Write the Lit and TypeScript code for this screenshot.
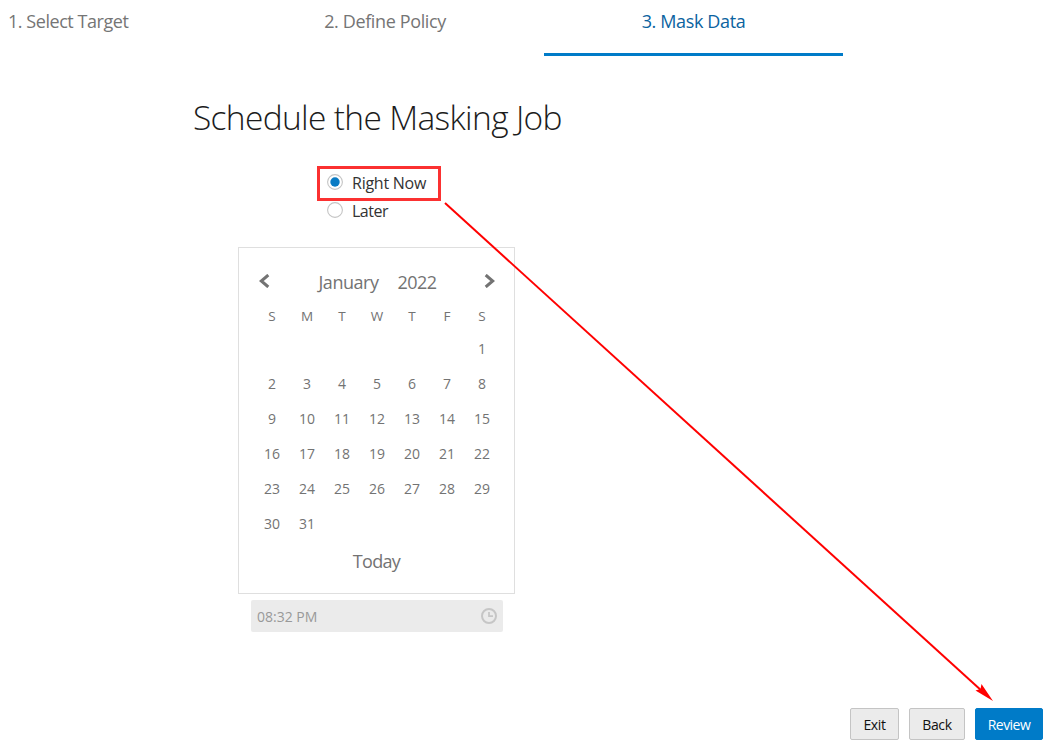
import { LitElement, html, css } from "lit";
import { customElement, state } from "lit/decorators.js";

const WEEKDAYS = ["S", "M", "T", "W", "T", "F", "S"];

@customElement("month-calendar")
class MonthCalendar extends LitElement {
  static styles = css`
    :host {
      display: block;
      box-sizing: border-box;
      width: 277px;
      height: 347px;
      border: 1px solid #dfdfdf;
      padding: 16px 15px 0;
      color: #737373;
    }
    .head {
      display: flex;
      justify-content: space-between;
      align-items: center;
      height: 34px;
      padding: 0 4px 0 5px;
    }
    .head svg {
      display: block;
      width: 11px;
      height: 14px;
    }
    .title {
      display: flex;
      gap: 20px;
      font-size: 18px;
      line-height: 34px;
      padding-top: 2px;
      white-space: nowrap;
    }
    .month { width: 60px; letter-spacing: -0.47px; text-indent: 1px; }
    .year { width: 39px; letter-spacing: -0.55px; }
    .grid {
      display: grid;
      grid-template-columns: repeat(7, 35px);
      grid-auto-rows: 35px;
      padding-left: 0.5px;
      font-size: 14px;
      line-height: 35px;
      text-align: center;
    }
    .names {
      grid-auto-rows: 33px;
      line-height: 36px;
      font-size: 13.5px;
    }
    .today {
      text-align: center;
      font-size: 18px;
      line-height: 41px;
      letter-spacing: -0.7px;
    }
  `;

  render() {
    const days = Array.from({ length: 42 }, (_, i) => i - 5).slice(0, 37);
    return html`
      <div class="head">
        <svg viewBox="0 0 11 14"><path d="M9.3 1 2.3 7l7 6" fill="none" stroke="#737373" stroke-width="3" /></svg>
        <div class="title"><span class="month">January</span><span class="year">2022</span></div>
        <svg viewBox="0 0 11 14"><path d="m1.700 1 7 6-7 6" fill="none" stroke="#737373" stroke-width="3" /></svg>
      </div>
      <div class="grid names">${WEEKDAYS.map((d) => html`<span>${d}</span>`)}</div>
      <div class="grid">${days.map((d) => html`<span>${d > 0 && d <= 31 ? d : ""}</span>`)}</div>
      <div class="today">Today</div>
    `;
  }
}

@customElement("app-root")
class AppRoot extends LitElement {
  @state() choice = "now";

  static styles = css`
    :host {
      display: block;
      position: relative;
      width: 1053px;
      height: 752px;
      overflow: hidden;
      background: #fff;
      font-family: "Open Sans", "Noto Sans", sans-serif;
      color: #333;
    }
    .page {
      display: flex;
      flex-direction: column;
      height: 752px;
    }
    .train {
      display: grid;
      grid-template-columns: 226px 299px 299px;
      column-gap: 9.5px;
      height: 56px;
      font-size: 18px;
      line-height: 42px;
      color: #757575;
      white-space: nowrap;
      letter-spacing: -0.37px;
    }
    .step { box-sizing: border-box; text-align: center; }
    .first { text-align: left; padding-left: 8px; letter-spacing: -0.45px; }
    .active { color: #0b63a0; border-bottom: 3px solid #007bc8; }
    h1 {
      margin: 36px 0 0 193px;
      font-weight: 300;
      font-size: 33.5px;
      line-height: 50px;
      letter-spacing: -0.66px;
      color: #1c1c1c;
      white-space: nowrap;
    }
    .choices {
      width: 124px;
      margin: 24px 0 0 317px;
      font-size: 16px;
      letter-spacing: -0.25px;
      white-space: nowrap;
    }
    .choice {
      box-sizing: border-box;
      display: flex;
      align-items: center;
      gap: 9px;
      height: 35px;
      padding-left: 10px;
    }
    .marked { border: 3px solid #fb3131; padding: 0 0 1px 7px; }
    .later { height: 20px; padding-bottom: 1px; letter-spacing: -0.5px; }
    .choice svg { display: block; width: 16px; height: 16px; margin-top: -2px; }
    month-calendar { margin: 26px 0 0 238px; flex: none; }
    .time {
      box-sizing: border-box;
      display: flex;
      justify-content: space-between;
      align-items: center;
      width: 252px;
      height: 32px;
      margin: 6px 0 0 251px;
      padding: 1px 6px 0;
      border-radius: 2px;
      background: #ebebeb;
      color: #999;
      font-size: 14px;
    }
    .time svg { display: block; width: 16px; height: 16px; margin-top: -1px; }
    .actions {
      display: flex;
      justify-content: flex-end;
      gap: 10px;
      margin: auto 10px 12px 0;
    }
    .btn {
      box-sizing: border-box;
      height: 32px;
      padding: 0;
      border: 1px solid #c4c4c4;
      border-radius: 2px;
      background: #ebebeb;
      color: #111;
      font-family: inherit;
      font-size: 14px;
      line-height: 31px;
      letter-spacing: -0.4px;
      width: 56px;
    }
    .exit { width: 49px; }
    .primary { width: 68px; background: #007bc8; border-color: #007bc8; color: #fff; letter-spacing: -0.55px; }
    .arrow {
      position: absolute;
      inset: 0;
      width: 1053px;
      height: 752px;
      pointer-events: none;
    }
  `;

  radio(on: boolean) {
    return html`<svg viewBox="0 0 16 16">
      <circle cx="8" cy="8" r="7.4" fill="#fff" stroke="#c4c4c4" stroke-width="1.1" />
      <circle cx="8" cy="8" r="4.7" fill=${on ? "#0a7bc4" : "none"} />
    </svg>`;
  }

  render() {
    return html`
      <div class="page">
        <nav class="train">
          <div class="step first"><span>1. Select Target</span></div>
          <div class="step"><span>2. Define Policy</span></div>
          <div class="step active"><span>3. Mask Data</span></div>
        </nav>
        <h1><span>Schedule the Masking Job</span></h1>
        <div class="choices">
          <div class="choice marked" @click=${() => (this.choice = "now")}>${this.radio(this.choice === "now")}<span>Right Now</span></div>
          <div class="choice later" @click=${() => (this.choice = "later")}>${this.radio(this.choice === "later")}<span>Later</span></div>
        </div>
        <month-calendar></month-calendar>
        <div class="time">
          <span>08:32 PM</span>
          <svg viewBox="0 0 16 16" fill="none" stroke="#c6c6c6">
            <circle cx="8" cy="8" r="7" stroke-width="2" />
            <path d="M8 4v4.200h4" stroke-width="1.700" />
          </svg>
        </div>
        <div class="actions">
          <button class="btn exit">Exit</button>
          <button class="btn">Back</button>
          <button class="btn primary">Review</button>
        </div>
      </div>
      <svg class="arrow" viewBox="0 0 1053 752">
        <path d="M445 203 983 692" stroke="#f00" stroke-width="2" />
        <path d="m993 701-17.500-10.500 5-1.500 1-5z" fill="#f00" />
      </svg>
    `;
  }
}
